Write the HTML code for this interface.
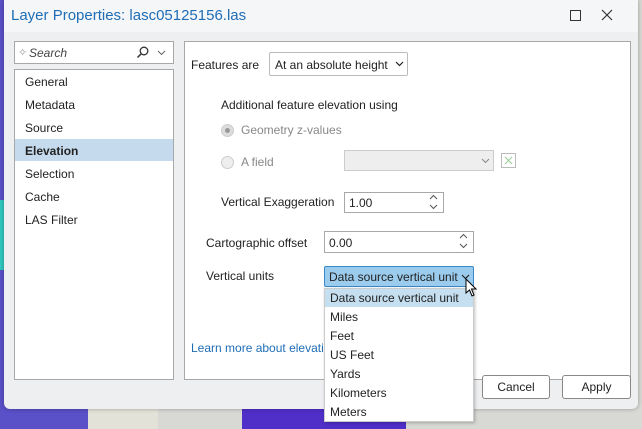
<!DOCTYPE html>
<html><head><style>
*{box-sizing:border-box;margin:0;padding:0}
body{width:642px;height:429px;overflow:hidden;position:relative;background:#d8d8d4;font-family:"Liberation Sans",sans-serif;font-size:12px;color:#222}
.a{position:absolute}
.t{position:absolute;white-space:nowrap}
.box{position:absolute;background:#fff;border:1px solid #a8a8a8}
svg{position:absolute}
</style></head><body>
<div class="a" style="left:0;top:0;width:88px;height:429px;background:#5a50c8"></div>
<div class="a" style="left:0;top:200px;width:6px;height:70px;background:#30c8c0"></div>
<div class="a" style="left:88px;top:400px;width:70px;height:29px;background:#e3e2d8"></div>
<div class="a" style="left:242px;top:400px;width:164px;height:29px;background:#4f2fc8"></div>
<div class="a" style="left:4px;top:0;width:634px;height:409px;background:#eeeff1;border-radius:0 0 6px 6px;box-shadow:0 0 4px rgba(0,0,0,.3)"></div>
<div class="a" style="left:4px;top:0;width:634px;height:32px;background:#f5f6f8"></div>
<div class="t" style="left:11px;top:7px;font-size:15px;color:#1e6db5">Layer Properties: lasc05125156.las</div>
<div class="a" style="left:570px;top:10px;width:11px;height:11px;border:1px solid #333"></div>
<svg style="left:601px;top:9px" width="12" height="12"><path d="M1 1L11 11M11 1L1 11" stroke="#333" stroke-width="1.2"/></svg>

<div class="box" style="left:14px;top:41px;width:160px;height:23px"></div>
<div class="t" style="left:18px;top:46px;color:#999;font-size:11px">✧</div>
<div class="t" style="left:29px;top:46px;font-style:italic;color:#444">Search</div>
<svg style="left:136px;top:45px" width="14" height="14"><circle cx="8" cy="6" r="3.8" fill="none" stroke="#333" stroke-width="1.3"/><path d="M5.3 8.7L1.5 12.5" stroke="#333" stroke-width="1.5"/></svg>
<svg style="left:157px;top:50px" width="9" height="6"><path d="M1 1L4.5 4.5L8 1" fill="none" stroke="#666"/></svg>

<div class="box" style="left:14px;top:69px;width:160px;height:311px"></div>
<div class="t" style="left:25px;top:75px">General</div>
<div class="t" style="left:25px;top:98px">Metadata</div>
<div class="t" style="left:25px;top:121px">Source</div>
<div class="a" style="left:15px;top:139px;width:158px;height:22px;background:#c5dbed"></div>
<div class="t" style="left:25px;top:144px;font-weight:bold">Elevation</div>
<div class="t" style="left:25px;top:167px">Selection</div>
<div class="t" style="left:25px;top:190px">Cache</div>
<div class="t" style="left:25px;top:213px">LAS Filter</div>

<div class="box" style="left:184px;top:41px;width:447px;height:339px"></div>
<div class="t" style="left:191px;top:58px">Features are</div>
<div class="box" style="left:269px;top:52px;width:139px;height:24px;border-radius:2px;border-color:#bbb"></div>
<div class="t" style="left:275px;top:58px">At an absolute height</div>
<svg style="left:395px;top:61px" width="9" height="6"><path d="M1 1L4.5 4.5L8 1" fill="none" stroke="#222" stroke-width="1.2"/></svg>
<div class="t" style="left:221px;top:98px">Additional feature elevation using</div>
<div class="a" style="left:221px;top:124px;width:13px;height:13px;border-radius:50%;background:#ddd;border:1px solid #ccc"></div>
<div class="a" style="left:225px;top:128px;width:5px;height:5px;border-radius:50%;background:#999"></div>
<div class="t" style="left:241px;top:123px;color:#888">Geometry z-values</div>
<div class="a" style="left:221px;top:156px;width:13px;height:13px;border-radius:50%;background:#eee;border:1px solid #ccc"></div>
<div class="t" style="left:241px;top:155px;color:#888">A field</div>
<div class="a" style="left:344px;top:150px;width:150px;height:21px;background:#eee;border:1px solid #ccc"></div>
<svg style="left:481px;top:158px" width="9" height="6"><path d="M1 1L4.5 4.5L8 1" fill="none" stroke="#888"/></svg>
<div class="a" style="left:501px;top:153px;width:15px;height:15px;border:1px solid #bbb"></div>
<svg style="left:504px;top:156px" width="9" height="9"><path d="M1 1L8 8M8 1L1 8" stroke="#9c9" stroke-width="1"/></svg>
<div class="t" style="left:221px;top:195px">Vertical Exaggeration</div>
<div class="box" style="left:344px;top:192px;width:100px;height:21px"></div>
<div class="t" style="left:349px;top:196px">1.00</div>
<svg style="left:429px;top:194px" width="9" height="17"><path d="M1 5L4.5 1.5L8 5M1 11L4.5 14.5L8 11" fill="none" stroke="#555"/></svg>
<div class="t" style="left:206px;top:236px">Cartographic offset</div>
<div class="box" style="left:324px;top:231px;width:150px;height:22px"></div>
<div class="t" style="left:329px;top:236px">0.00</div>
<svg style="left:459px;top:233px" width="9" height="17"><path d="M1 5L4.5 1.5L8 5M1 11L4.5 14.5L8 11" fill="none" stroke="#555"/></svg>
<div class="t" style="left:206px;top:269px">Vertical units</div>
<div class="a" style="left:324px;top:266px;width:150px;height:21px;background:#9bcbed;border:1px solid #3a88c8;border-radius:2px"></div>
<div class="t" style="left:329px;top:270px">Data source vertical unit</div>
<svg style="left:461px;top:274px" width="9" height="6"><path d="M1 1L4.5 4.5L8 1" fill="none" stroke="#222" stroke-width="1.2"/></svg>
<div class="t" style="left:191px;top:341px;color:#1e6db5">Learn more about elevatio</div>

<div class="a" style="left:324px;top:288px;width:150px;height:134px;background:#fff;border:1px solid #ccc;box-shadow:1px 1px 3px rgba(0,0,0,.25)"></div>
<div class="a" style="left:325px;top:289px;width:148px;height:18px;background:#c5dff0"></div>
<div class="t" style="left:330px;top:291px">Data source vertical unit</div>
<div class="t" style="left:330px;top:310px">Miles</div>
<div class="t" style="left:330px;top:329px">Feet</div>
<div class="t" style="left:330px;top:348px">US Feet</div>
<div class="t" style="left:330px;top:367px">Yards</div>
<div class="t" style="left:330px;top:386px">Kilometers</div>
<div class="t" style="left:330px;top:405px">Meters</div>
<svg style="left:465px;top:278px" width="14" height="20"><path d="M1 1 L1 15 L4.5 12 L7 18 L9 17 L6.5 11 L11 11 Z" fill="#fff" stroke="#000" stroke-width="1"/></svg>

<div class="a" style="left:482px;top:375px;width:68px;height:24px;background:#fff;border:1px solid #888;border-radius:3px;text-align:center;line-height:22px">Cancel</div>
<div class="a" style="left:562px;top:375px;width:69px;height:24px;background:#fff;border:1px solid #888;border-radius:3px;text-align:center;line-height:22px">Apply</div>
</body></html>
